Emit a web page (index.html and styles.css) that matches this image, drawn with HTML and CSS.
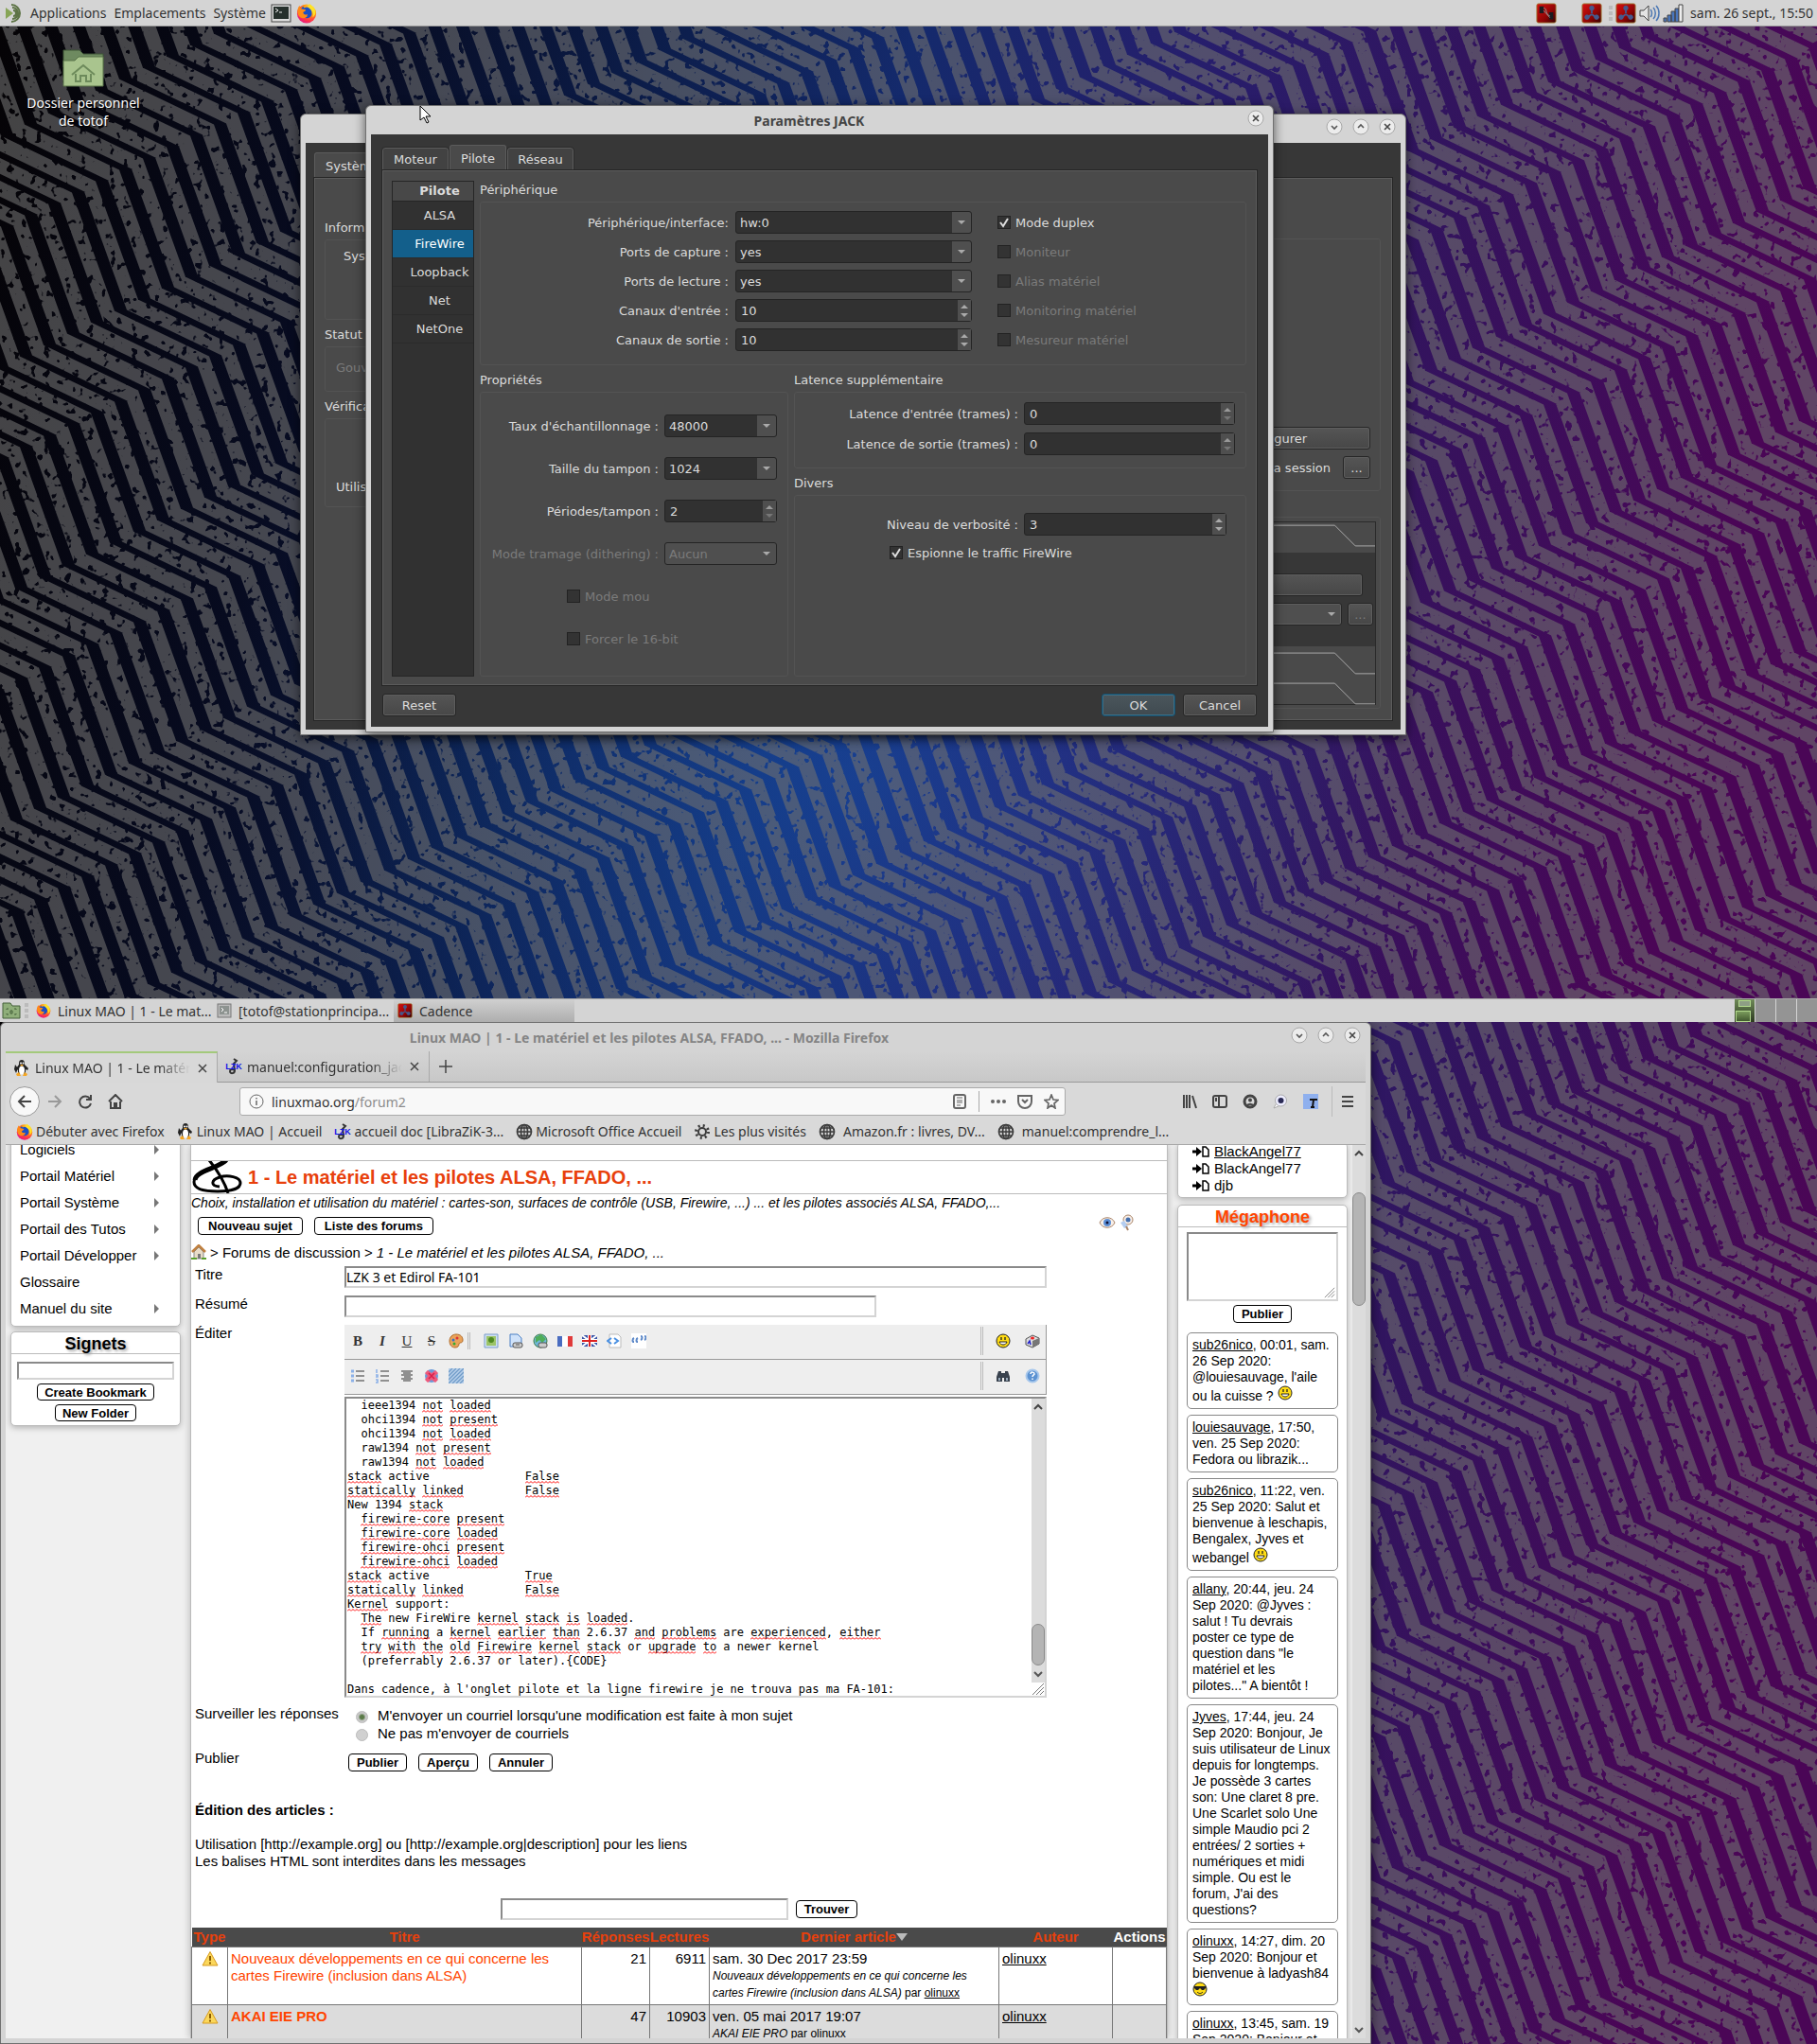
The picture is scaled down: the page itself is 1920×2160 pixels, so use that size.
FILE: index.html
```html
<!DOCTYPE html>
<html lang="fr">
<head>
    <meta charset="UTF-8">
    <meta name="viewport" content="width=device-width, initial-scale=1.0">
    <title>Bureau MATE</title>
    <link rel="stylesheet" href="styles.css">
</head>
<body>

    <!-- Shared icons -->
    <svg class="defs" aria-hidden="true">
        <defs>
            <linearGradient id="fond" x1="0" y1="0" x2="1" y2="0.12">
                <stop offset="0" stop-color="#050305"/>
                <stop offset="0.2" stop-color="#070b20"/>
                <stop offset="0.36" stop-color="#0c1d4a"/>
                <stop offset="0.5" stop-color="#142a6c"/>
                <stop offset="0.66" stop-color="#271e6c"/>
                <stop offset="0.8" stop-color="#32145e"/>
                <stop offset="1" stop-color="#4a0656"/>
            </linearGradient>
            <radialGradient id="lueur" cx="0.5" cy="0.5" r="0.5">
                <stop offset="0" stop-color="#1659b4" stop-opacity="0.5"/>
                <stop offset="1" stop-color="#1659b4" stop-opacity="0"/>
            </radialGradient>
            <filter id="usure" x="0" y="0" width="1920" height="1080" filterUnits="userSpaceOnUse">
                <feTurbulence type="fractalNoise" baseFrequency="0.13" numOctaves="2" seed="4"/>
                <feColorMatrix values="0 0 0 0 0  0 0 0 0 0  0 0 0 0 0  14 0 0 0 -8.6"/>
                <feComposite in="SourceGraphic" operator="out"/>
            </filter>
            <radialGradient id="ff-feu" cx="0.75" cy="0.15" r="0.95">
                <stop offset="0" stop-color="#fff44f"/>
                <stop offset="0.4" stop-color="#ff980e"/>
                <stop offset="0.75" stop-color="#ff3647"/>
                <stop offset="1" stop-color="#e31587"/>
            </radialGradient>
            <linearGradient id="rouge" x1="0" y1="0" x2="1" y2="1">
                <stop offset="0" stop-color="#d81010"/>
                <stop offset="0.6" stop-color="#8e0505"/>
                <stop offset="1" stop-color="#300"/>
            </linearGradient>
        </defs>
        <symbol id="firefox" viewBox="0 0 24 24">
            <circle cx="12" cy="12.5" r="11" fill="url(#ff-feu)"/>
            <path d="M12 5a7 7 0 0 1 6 8c-1 4-5 6-9 4 2 0 4-1 4-2-3 1-6-1-6-4l-2-2c0-2 2-4 3-5l1 2z" fill="#1a4fc4"/>
            <path d="M4 3c0 3 1 4 3 4l4 1c0 1-1 2-3 3 0 3 3 3 5 2 0 4-5 6-8 4C0 14 1 6 4 3z" fill="#ff8a16"/>
            <path d="M15 1c5 3 8 7 7 12-1 2-3 4-3 4 1-5 0-8-4-11-1-2-1-3 0-5z" fill="#ffe226"/>
        </symbol>
        <symbol id="cadence" viewBox="0 0 24 24">
            <rect x="1" y="1" width="22" height="22" rx="2" fill="url(#rouge)" stroke="#a07a35"/>
            <g fill="#46598c" stroke="#46598c"><path d="M12 12V7M12 13l-5 4M12 13l5 4" stroke-width="2"/><circle cx="12" cy="6" r="2.5"/><circle cx="6.500" cy="16.500" r="2.500"/><circle cx="17.500" cy="16.500" r="2.500"/></g>
        </symbol>
        <symbol id="tux" viewBox="0 0 18 18">
            <path d="M2 5l3 4-2 5-2-4z" fill="#222"/><path d="M9 0c3 0 3 3 3 5l4 4-1 2-2-1v5H5v-5l-2 2 0-3 3-4c0-2 0-5 3-5z" fill="#222"/>
            <ellipse cx="9" cy="11" rx="3" ry="4.500" fill="#fff"/><circle cx="8" cy="3.500" r="1" fill="#fff"/><circle cx="10.500" cy="3.500" r="1" fill="#fff"/>
            <path d="M7 5h4l-2 2zM3 15l3-2 2 4H4zM15 15l-3-2-2 4h4z" fill="#f5a623"/>
        </symbol>
        <symbol id="lzk" viewBox="0 0 18 18">
            <path d="M9 1l3 2-3 3 1 7c0 4-5 4-5 1 0-2 3-3 4-1" fill="none" stroke="#333" stroke-width="2"/>
            <text x="9" y="12" text-anchor="middle" class="lzk-text">LZK</text>
        </symbol>
        <symbol id="globe" viewBox="0 0 18 18">
            <g fill="none" stroke="#3c3c3c" stroke-width="1.700"><circle cx="9" cy="9" r="7.500"/><ellipse cx="9" cy="9" rx="3.500" ry="7.500"/><path d="M1.500 9h15M9 1.500v15M3 5h12M3 13h12" stroke-width="1.300"/></g>
        </symbol>
        <symbol id="b-min" viewBox="0 0 18 18"><circle cx="9" cy="9" r="8" fill="#ececec" stroke="#a8a8a8"/><path d="M6 8l3 3 3-3" fill="none" stroke="#555" stroke-width="1.600"/></symbol>
        <symbol id="b-max" viewBox="0 0 18 18"><circle cx="9" cy="9" r="8" fill="#ececec" stroke="#a8a8a8"/><path d="M6 10l3-3 3 3" fill="none" stroke="#555" stroke-width="1.600"/></symbol>
        <symbol id="b-close" viewBox="0 0 18 18"><circle cx="9" cy="9" r="8" fill="#ececec" stroke="#a8a8a8"/><path d="M6 6l6 6M12 6l-6 6" fill="none" stroke="#444" stroke-width="1.600"/></symbol>
        <symbol id="smiley" viewBox="0 0 16 16"><circle cx="8" cy="8" r="7" fill="#ffdc14" stroke="#222"/><path d="M6 4v3M10 4v3" stroke="#222" stroke-width="1.300"/><path d="M4 9c1 4 7 4 8 0z" fill="#fff" stroke="#222"/></symbol>
        <symbol id="cool" viewBox="0 0 16 16"><circle cx="8" cy="8" r="7" fill="#ffdc14" stroke="#222"/><path d="M2 5h12v2l-2 2h-2L8 7 6 9H4L2 7z" fill="#222"/><path d="M5 11c2 2 4 2 6 0" fill="none" stroke="#222"/></symbol>
        <symbol id="warn" viewBox="0 0 18 18"><path d="M9 1.500L17 16H1z" fill="#fbd75b" stroke="#d79a1e" stroke-linejoin="round"/><path d="M9 6v5M9 12.500v2" stroke="#8a5a00" stroke-width="2"/></symbol>
        <symbol id="doc" viewBox="0 0 18 14"><path d="M0 7h5" stroke="#000" stroke-width="3"/><path d="M4 2l6 5-6 5z"/><path d="M11 2h3l3 3v7h-6z" fill="#fff" stroke="#000" stroke-width="1.500"/></symbol>
        <symbol id="poignee" viewBox="0 0 14 14"><path d="M1 13L13 1M5 13l8-8M9 13l4-4" stroke="#777" fill="none"/></symbol>
        <symbol id="haut" viewBox="0 0 10 10"><path d="M1 7l4-4 4 4" fill="none" stroke="#444" stroke-width="2"/></symbol>
        <symbol id="bas" viewBox="0 0 10 10"><path d="M1 3l4 4 4-4" fill="none" stroke="#555" stroke-width="2"/></symbol>
    </svg>

    <!-- Upper monitor -->
    <section class="screen">
        <svg class="wallpaper" viewBox="0 0 1920 1080" preserveAspectRatio="none" aria-hidden="true">
            <rect width="1920" height="1080" fill="url(#fond)"/>
            <ellipse cx="900" cy="820" rx="600" ry="560" fill="url(#lueur)"/>
            <path class="zigzag" filter="url(#usure)"/>
        </svg>

        <header class="panel">
            <svg class="i20" viewBox="0 0 20 20"><path d="M1 4l8 6-8 6z" fill="#87a556"/><g fill="none" stroke="#5d7345" stroke-width="2"><path d="M8 4a6 6 0 1 1 0 12M7 1a9 9 0 1 1 0 18M9 7a3 3 0 0 1 0 6"/></g></svg>
            <button>Applications</button>
            <button>Emplacements</button>
            <button>Système</button>
            <svg class="i22" viewBox="0 0 22 22"><rect x="1" y="2" width="20" height="18" fill="#ddd" stroke="#444"/><rect x="3" y="4" width="16" height="13" fill="#26302c"/><path d="M5 6l3 2-3 2M9 10h3" stroke="#eee" fill="none"/></svg>
            <svg class="i22"><use href="#firefox"/></svg>
            <div class="tray">
                <svg class="i22 patch" viewBox="0 0 24 24"><rect x="1" y="1" width="22" height="22" rx="2" fill="url(#rouge)" stroke="#a07a35"/><path d="M4 4h5v8H4zM15 11h5v8h-5z" fill="#1c1c20"/><path d="M9 6c4 0 2 8 7 9M9 9l7 8" stroke="#999" fill="none"/></svg>
                <svg class="i22"><use href="#cadence"/></svg>
                <span class="grip"></span>
                <svg class="i22"><use href="#cadence"/></svg>
                <svg class="i22" viewBox="0 0 22 22"><path d="M1 8h4l5-5v16l-5-5H1z" fill="#e4e4e4" stroke="#444"/><path d="M12 7c2 2 2 6 0 8M15 5c3 3 3 9 0 12M18 3c4 4 4 12 0 16" fill="none" stroke="#4d78b4" stroke-width="1.500"/></svg>
                <svg class="i22" viewBox="0 0 22 22"><g fill="#4a77bd" stroke="#444"><path d="M1 16h3v4H1zM5 13h4v7H5zM9 9h4v11H9zM13 6h4v14h-4z"/><path d="M17 2h4v18h-4z" fill="#eee"/></g></svg>
                <span class="clock">sam. 26 sept., 15:50</span>
            </div>
        </header>

        <a class="folder" href="#">
            <svg viewBox="0 0 46 44"><path d="M2 3h17l4 4h21v14H2z" fill="#6e8a60" stroke="#3f5637"/><path d="M2 14h12l4-4h26v31H2z" fill="#a9c48e" stroke="#587348"/><path d="M11 29l12-10 12 10M15 28v8h5v-6h6v6h5v-8" fill="none" stroke="#6d8a5b" stroke-width="2"/></svg>
            Dossier personnel<br>de totof
        </a>

        <!-- Cadence -->
        <section class="window cadence">
            <header class="titlebar right">
                <button aria-label="Réduire"><svg><use href="#b-min"/></svg></button>
                <button aria-label="Agrandir"><svg><use href="#b-max"/></svg></button>
                <button aria-label="Fermer"><svg><use href="#b-close"/></svg></button>
            </header>
            <div class="qt cadence-body">
                <button class="cadence-tab">Système</button>
                <div class="cadence-panel">
                    <div class="cadence-left">
                        <h3>Informations système</h3>
                        <div class="groupbox g1"><p>Système :</p></div>
                        <h3>Statut du processeur</h3>
                        <div class="groupbox g2"><p class="off">Gouverneur :</p></div>
                        <h3>Vérifications</h3>
                        <div class="groupbox g3"><p>Utilisateur</p></div>
                    </div>
                    <div class="cadence-right">
                        <div class="groupbox g4">
                            <button class="btn">Configurer</button>
                            <div class="line"><span>de la session</span><button class="btn mini">...</button></div>
                        </div>
                        <div class="groupbox g5">
                            <div class="toolbox">
                                <svg class="fold" viewBox="0 0 208 32"><path d="M0 3h165l22 22h21" fill="none" stroke="#aaa"/></svg>
                                <div class="band">
                                    <button class="btn" aria-label="Pont"></button>
                                    <div class="line"><select class="btn" aria-label="Mode"><option></option></select><button class="btn mini off">...</button></div>
                                </div>
                                <svg class="fold" viewBox="0 0 208 32"><path d="M0 7h165l22 22h21" fill="none" stroke="#aaa"/></svg>
                                <svg class="fold" viewBox="0 0 208 32"><path d="M0 7h165l22 22h21" fill="none" stroke="#aaa"/></svg>
                            </div>
                        </div>
                    </div>
                </div>
            </div>
        </section>

        <!-- JACK settings -->
        <section class="window jack">
            <header class="titlebar">
                <h2>Paramètres JACK</h2>
                <button aria-label="Fermer"><svg><use href="#b-close"/></svg></button>
            </header>
            <form class="qt jack-body">
                <nav class="tabs">
                    <button type="button">Moteur</button>
                    <button type="button" class="active">Pilote</button>
                    <button type="button">Réseau</button>
                </nav>
                <div class="jack-panel">
                    <div class="drivers">
                        <b>Pilote</b>
                        <button type="button">ALSA</button>
                        <button type="button" class="active">FireWire</button>
                        <button type="button">Loopback</button>
                        <button type="button">Net</button>
                        <button type="button">NetOne</button>
                    </div>
                    <div class="settings">
                        <h3>Périphérique</h3>
                        <div class="groupbox device">
                            <div class="fields">
                                <label for="iface">Périphérique/interface:</label>
                                <select id="iface"><option>hw:0</option></select>
                                <label for="pcap">Ports de capture :</label>
                                <select id="pcap"><option>yes</option></select>
                                <label for="plec">Ports de lecture :</label>
                                <select id="plec"><option>yes</option></select>
                                <label for="cin">Canaux d'entrée :</label>
                                <span class="spin"><input id="cin" type="text" value="10"><i></i></span>
                                <label for="cout">Canaux de sortie :</label>
                                <span class="spin"><input id="cout" type="text" value="10"><i></i></span>
                            </div>
                            <div class="checks">
                                <label><input type="checkbox" checked>Mode duplex</label>
                                <label class="off"><input type="checkbox" disabled>Moniteur</label>
                                <label class="off"><input type="checkbox" disabled>Alias matériel</label>
                                <label class="off"><input type="checkbox" disabled>Monitoring matériel</label>
                                <label class="off"><input type="checkbox" disabled>Mesureur matériel</label>
                            </div>
                        </div>
                        <div class="halves">
                            <div class="half-left">
                                <h3>Propriétés</h3>
                                <div class="groupbox props">
                                    <label for="taux">Taux d'échantillonnage :</label>
                                    <select id="taux"><option>48000</option></select>
                                    <label for="tampon">Taille du tampon :</label>
                                    <select id="tampon"><option>1024</option></select>
                                    <label for="periodes">Périodes/tampon :</label>
                                    <span class="spin"><input id="periodes" type="text" value="2"><i class="low"></i></span>
                                    <label for="dither" class="off">Mode tramage (dithering) :</label>
                                    <select id="dither" class="plain" disabled><option>Aucun</option></select>
                                    <label class="off wide"><input type="checkbox" disabled>Mode mou</label>
                                    <label class="off wide"><input type="checkbox" disabled>Forcer le 16-bit</label>
                                </div>
                            </div>
                            <div class="half-right">
                                <h3>Latence supplémentaire</h3>
                                <div class="groupbox latency">
                                    <label for="lin">Latence d'entrée (trames) :</label>
                                    <span class="spin"><input id="lin" type="text" value="0"><i class="low"></i></span>
                                    <label for="lout">Latence de sortie (trames) :</label>
                                    <span class="spin"><input id="lout" type="text" value="0"><i class="low"></i></span>
                                </div>
                                <h3>Divers</h3>
                                <div class="groupbox misc">
                                    <label for="verb">Niveau de verbosité :</label>
                                    <span class="spin"><input id="verb" type="text" value="3"><i></i></span>
                                    <label class="wide"><input type="checkbox" checked>Espionne le traffic FireWire</label>
                                </div>
                            </div>
                        </div>
                    </div>
                </div>
                <footer class="actions">
                    <button type="button" class="btn">Reset</button>
                    <button type="button" class="btn ok">OK</button>
                    <button type="button" class="btn">Cancel</button>
                </footer>
            </form>
        </section>

        <svg class="pointer" viewBox="0 0 14 20"><path d="M1 1v15l4-3 3 6 2-1-3-6h5z" fill="#fff" stroke="#000"/></svg>

        <footer class="panel taskbar">
            <svg class="i20" viewBox="0 0 20 20"><path d="M1 2h8l2 3h8v13H1z" fill="#8fae7a" stroke="#44603a"/><path d="M5 9v-1h2M13 8h2v1M15 13v1h-2M7 14H5v-1M9 10h2v3H9z" fill="none" stroke="#44603a"/></svg>
            <span class="grip"></span>
            <button class="task"><svg class="i16"><use href="#firefox"/></svg>Linux MAO | 1 - Le mat...</button>
            <button class="task"><svg class="i16" viewBox="0 0 16 16"><rect x="1" y="1" width="14" height="14" fill="#bbb" stroke="#777"/><rect x="3" y="3" width="10" height="9" fill="#8d9390"/><path d="M5 5l2 2-2 2M8 10h3" stroke="#fff" fill="none"/></svg>[totof@stationprincipa...</button>
            <button class="task active"><svg class="i16"><use href="#cadence"/></svg>Cadence</button>
            <div class="workspaces"><span class="current"><i></i><b></b></span><span></span><span></span><span></span></div>
        </footer>
    </section>

    <!-- Lower monitor -->
    <section class="screen">
        <svg class="wallpaper" viewBox="0 0 1920 1080" preserveAspectRatio="none" aria-hidden="true">
            <rect width="1920" height="1080" fill="url(#fond)"/>
            <path class="zigzag" filter="url(#usure)"/>
        </svg>

        <section class="window browser">
            <header class="titlebar">
                <h2>Linux MAO | 1 - Le matériel et les pilotes ALSA, FFADO, ... - Mozilla Firefox</h2>
                <button aria-label="Réduire"><svg><use href="#b-min"/></svg></button>
                <button aria-label="Agrandir"><svg><use href="#b-max"/></svg></button>
                <button aria-label="Fermer"><svg><use href="#b-close"/></svg></button>
            </header>

            <nav class="ff-tabs">
                <div class="ff-tab active"><svg class="i18"><use href="#tux"/></svg><span>Linux MAO | 1 - Le matériel</span><button aria-label="Fermer l'onglet"><svg viewBox="0 0 10 10"><path d="M1 1l8 8M9 1l-8 8"/></svg></button></div>
                <div class="ff-tab"><svg class="i18"><use href="#lzk"/></svg><span>manuel:configuration_jack</span><button aria-label="Fermer l'onglet"><svg viewBox="0 0 10 10"><path d="M1 1l8 8M9 1l-8 8"/></svg></button></div>
                <button class="new-tab" aria-label="Nouvel onglet"><svg viewBox="0 0 14 14"><path d="M7 0v14M0 7h14"/></svg></button>
            </nav>

            <div class="ff-nav">
                <button class="back" aria-label="Précédent"><svg viewBox="0 0 16 16"><path d="M15 8H2M8 2L2 8l6 6"/></svg></button>
                <button class="fwd" aria-label="Suivant" disabled><svg viewBox="0 0 16 16"><path d="M1 8h13M8 2l6 6-6 6"/></svg></button>
                <button aria-label="Actualiser"><svg viewBox="0 0 16 16"><path d="M13 5a6 6 0 1 0 1 5M14 1v5H9"/></svg></button>
                <button aria-label="Accueil"><svg viewBox="0 0 16 16"><path d="M1 8l7-7 7 7M3 8v7h10V8M7 15v-5h2v5"/></svg></button>
                <div class="urlbar">
                    <svg viewBox="0 0 16 16"><circle cx="8" cy="8" r="7" stroke-width="1"/><path d="M8 7v5M8 4v1.500" stroke-width="1.500"/></svg>
                    <span class="url">linuxmao.org<i>/forum2</i></span>
                    <svg viewBox="0 0 16 16"><rect x="2" y="1" width="12" height="14" rx="2"/><path d="M5 4h6M5 7h6M5 9h6M5 12h4" stroke-width="1"/></svg>
                    <b></b>
                    <svg viewBox="0 0 16 16"><g fill="#666" stroke="none"><circle cx="2" cy="8" r="2"/><circle cx="8" cy="8" r="2"/><circle cx="14" cy="8" r="2"/></g></svg>
                    <svg viewBox="0 0 16 16"><path d="M1 2h14v6a7 7 0 0 1-14 0zM5 6l3 3 3-3"/></svg>
                    <svg viewBox="0 0 16 16"><path d="M8 1l2 5 5 .500-4 3.500 1 5-4-3-4 3 1-5-4-3.500L6 6z" stroke-width="1.700"/></svg>
                </div>
                <div class="ff-tools">
                    <button aria-label="Bibliothèque"><svg viewBox="0 0 16 16"><path d="M2 1v14M5 1v14M8 1v14M11 2l4 13"/></svg></button>
                    <button aria-label="Panneaux"><svg viewBox="0 0 16 16"><rect x="1" y="2" width="14" height="12" rx="2"/><path d="M7 2v12M3 5h2M3 7h2"/></svg></button>
                    <button aria-label="Compte"><svg viewBox="0 0 16 16"><circle cx="8" cy="8" r="6" stroke-width="3"/><circle cx="8" cy="6.500" r="2" fill="#444" stroke="none"/><path d="M4 13c2-3 6-3 8 0" stroke-width="2"/></svg></button>
                    <button aria-label="Dictaphone"><svg viewBox="0 0 16 16"><circle cx="8.500" cy="7" r="6" fill="#eef" stroke="#aaa" stroke-width="1"/><path d="M3 11l-2 4 5-2" fill="#fff" stroke="#aaa" stroke-width="1"/><circle cx="8.500" cy="7" r="3" fill="#2a2a55" stroke="none"/></svg></button>
                    <button aria-label="Traduire"><svg viewBox="0 0 16 16"><path d="M0 0h16v16H0z" fill="#8fb0ee" stroke="none"/><path d="M7 6h8M11 6l-1 8M8 14h4" stroke="#111"/></svg></button>
                    <button class="menu" aria-label="Menu"><svg viewBox="0 0 16 16"><path d="M2 3h12M2 8h12M2 13h12"/></svg></button>
                </div>
            </div>

            <nav class="bookmarks">
                <a href="#"><svg class="i18"><use href="#firefox"/></svg>Débuter avec Firefox</a>
                <a href="#"><svg class="i18"><use href="#tux"/></svg>Linux MAO | Accueil</a>
                <a href="#"><svg class="i18"><use href="#lzk"/></svg>accueil doc [LibraZiK-3...</a>
                <a href="#"><svg class="i18"><use href="#globe"/></svg>Microsoft Office Accueil</a>
                <a href="#"><svg class="i18" viewBox="0 0 18 18"><g fill="none" stroke="#3c3c3c"><circle cx="9" cy="9" r="4" stroke-width="2"/><circle cx="9" cy="9" r="6.500" stroke-width="3" stroke-dasharray="2 3.100"/></g></svg>Les plus visités</a>
                <a href="#" class="loose"><svg class="i18"><use href="#globe"/></svg>Amazon.fr : livres, DV...</a>
                <a href="#" class="loose"><svg class="i18"><use href="#globe"/></svg>manuel:comprendre_l...</a>
            </nav>

            <div class="viewport">
                <aside class="col-left">
                    <nav class="box menu-list">
                        <a href="#" class="sub">Logiciels</a>
                        <a href="#" class="sub">Portail Matériel</a>
                        <a href="#" class="sub">Portail Système</a>
                        <a href="#" class="sub">Portail des Tutos</a>
                        <a href="#" class="sub">Portail Développer</a>
                        <a href="#">Glossaire</a>
                        <a href="#" class="sub">Manuel du site</a>
                    </nav>
                    <section class="box signets">
                        <h3>Signets</h3>
                        <input type="text" aria-label="Signet">
                        <button class="pill">Create Bookmark</button>
                        <button class="pill">New Folder</button>
                    </section>
                </aside>

                <main class="forum">
                    <h1>
                        <svg viewBox="0 0 54 34"><g fill="none" stroke="#000"><path d="M38 -1C30 8 3 11 3 22c0 9 14 10 25 10 14 0 24-3 24-9 0-6-13-9-22-6-9 3-10 9 0 10" stroke-width="3"/><path d="M37 -1C28 8 5 10 4 20" stroke-width="5"/><path d="M19 -1c8 10 16 22 20 35" stroke-width="3"/></g></svg>
                        <span>1 - Le matériel et les pilotes ALSA, FFADO, ...</span>
                    </h1>
                    <p class="desc">Choix, installation et utilisation du matériel : cartes-son, surfaces de contrôle (USB, Firewire, ...) ... et les pilotes associés ALSA, FFADO,...</p>
                    <div class="forum-actions">
                        <button class="pill">Nouveau sujet</button>
                        <button class="pill">Liste des forums</button>
                        <span class="watch">
                            <svg class="i18" viewBox="0 0 18 18"><path d="M1 9c3-7 13-7 16 0-3 7-13 7-16 0z" fill="#f8efe8" stroke="#a98468"/><circle cx="9" cy="9" r="4" fill="#5c8fd6"/><circle cx="9" cy="9" r="1.500" fill="#113"/></svg>
                            <svg class="i18" viewBox="0 0 18 18"><circle cx="11" cy="6" r="5" fill="#f8efe8" stroke="#a98468"/><circle cx="11" cy="6" r="2.500" fill="#446fae"/><path d="M3 9l4-2 4 6-4 2z" fill="#b4cdf0"/><path d="M9 13l2 4" stroke="#a98468" stroke-width="2"/></svg>
                        </span>
                    </div>
                    <p class="crumbs">
                        <svg class="i16" viewBox="0 0 16 16"><path d="M3 8v7h10V8L8 3z" fill="#e8dcc8" stroke="#888"/><path d="M1 8l7-7 7 7" fill="none" stroke="#c08040" stroke-width="2.500"/><path d="M7 10h3v5H7z" fill="#777"/><path d="M0 15h6M11 15h5" stroke="#5aa02c" stroke-width="2"/></svg>
                        &gt; Forums de discussion &gt; <i>1 - Le matériel et les pilotes ALSA, FFADO, ...</i>
                    </p>

                    <form class="post">
                        <label for="titre">Titre</label>
                        <input id="titre" type="text" value="LZK 3 et Edirol FA-101">
                        <label for="resume">Résumé</label>
                        <input id="resume" class="short" type="text">
                        <label for="texte">Éditer</label>
                        <div class="editor">
                            <div class="toolbar">
                                <button type="button"><b>B</b></button>
                                <button type="button"><b><em>I</em></b></button>
                                <button type="button"><u>U</u></button>
                                <button type="button"><s>S</s></button>
                                <button type="button" aria-label="Couleur"><svg viewBox="0 0 16 16"><path d="M8 1c5 0 7 3 7 6 0 4-3 2-4 4 0 2-1 4-4 4-4 0-6-3-6-7s3-7 7-7z" fill="#e9a35a" stroke="#b06a28"/><circle cx="5" cy="7" r="1.500" fill="#3a6fc4"/><circle cx="9" cy="5" r="1.500" fill="#d33"/><circle cx="6" cy="11" r="1.500" fill="#3a3"/></svg></button>
                                <span class="sep"></span>
                                <button type="button" aria-label="Image"><svg viewBox="0 0 16 16"><path d="M1 1h14v14H1z" fill="#cfe0f4" stroke="#7a9cc8"/><path d="M3 3h10v10H3z" fill="#9cc468"/><circle cx="8" cy="7" r="3" fill="#4f8a22"/></svg></button>
                                <button type="button" aria-label="Page"><svg viewBox="0 0 16 16"><path d="M2 1h8l4 4v9H2z" fill="#cfe2fa" stroke="#4a7fc4"/><rect x="5" y="10" width="10" height="5" rx="2" fill="#ccc" stroke="#555"/><path d="M8 12h4" stroke="#555"/></svg></button>
                                <button type="button" aria-label="Lien"><svg viewBox="0 0 16 16"><circle cx="8" cy="8" r="7" fill="#6fb6d8" stroke="#3c7c44"/><path d="M3 4l6-3 5 5-4 4-3-3-4 3z" fill="#4fae58"/><rect x="6" y="10" width="9" height="5" rx="2" fill="#ccc" stroke="#555"/></svg></button>
                                <button type="button" aria-label="Français"><svg viewBox="0 0 16 16"><path d="M0 3h5v11H0z" fill="#4a6cc0"/><path d="M5 3h6v11H5z" fill="#fff"/><path d="M11 3h5v11h-5z" fill="#e03a3a"/></svg></button>
                                <button type="button" aria-label="Anglais"><svg viewBox="0 0 16 12"><path d="M0 0h16v12H0z" fill="#3a55a8"/><path d="M0 0l16 12M16 0L0 12" stroke="#fff" stroke-width="2"/><path d="M8 0v12M0 6h16" stroke="#fff" stroke-width="4"/><path d="M8 0v12M0 6h16" stroke="#d22" stroke-width="2"/></svg></button>
                                <button type="button" aria-label="Code"><svg viewBox="0 0 16 16"><path d="M3 1h9l3 3v11H3z" fill="#fff" stroke="#bbb"/><path d="M5 5L1 8l4 3M8 5l4 3-4 3" fill="none" stroke="#4a90e2" stroke-width="2"/></svg></button>
                                <button type="button" class="quote" aria-label="Citation"><svg viewBox="0 0 16 16"><path d="M0 0h16v16H0z" fill="#fff"/><path d="M3 5c-2 1-2 4 0 4M7 5c-2 1-2 4 0 4M10 3c2 0 2 3 0 4M14 3c2 0 2 3 0 4" fill="none" stroke="#5c88c8" stroke-width="2"/></svg></button>
                                <span class="sep end"></span>
                                <button type="button" aria-label="Smileys"><svg><use href="#smiley"/></svg></button>
                                <button type="button" aria-label="Caractères"><svg viewBox="0 0 16 16"><path d="M1 6l7-4 7 3v6l-7 4-7-3z" fill="#ddd" stroke="#555"/><path d="M8 8v7l7-4V5z" fill="#777"/><ellipse cx="8" cy="5" rx="2" ry="1.500" fill="#e22"/><path d="M3 11l2-3 1 4" stroke="#22c" fill="none" stroke-width="1.500"/></svg></button>
                            </div>
                            <div class="toolbar">
                                <button type="button" aria-label="Liste"><svg viewBox="0 0 16 16"><path d="M1 3h3M1 8h3M1 13h3" stroke="#8ab0e8" stroke-width="3"/><path d="M6 3h9M6 8h9M6 13h9" stroke="#333"/></svg></button>
                                <button type="button" aria-label="Liste numérotée"><svg viewBox="0 0 16 16"><path d="M2 1v4M1 7h2v2H1M1 12h2v3H1" stroke="#8ab0e8" fill="none" stroke-width="1.500"/><path d="M6 3h9M6 8h9M6 13h9" stroke="#333"/></svg></button>
                                <button type="button" aria-label="Centrer"><svg viewBox="0 0 16 16"><path d="M2 3h12M4 5h8M2 7h12M5 9h7M2 11h12M4 13h8" stroke="#333"/></svg></button>
                                <button type="button" aria-label="Aide wiki"><svg viewBox="0 0 16 16"><circle cx="8" cy="8" r="7" fill="#6c9ad8"/><path d="M4 2l4 3 4-3 3 3-3 3 3 4-3 3-4-3-4 3-3-3 3-4-3-3z" fill="#ee5a7c"/><path d="M5 5l6 6M11 5l-6 6" stroke="#d4204a" stroke-width="1.500"/></svg></button>
                                <button type="button" aria-label="Trame"><svg viewBox="0 0 16 16"><path d="M0 0h16v16H0z" fill="#b8d0ea"/><path d="M0 4l4-4M0 8l8-8M0 12L12 0M0 16L16 0M4 16L16 4M8 16l8-8M12 16l4-4" stroke="#6f9bc8" stroke-width="1.300"/></svg></button>
                                <span class="sep end"></span>
                                <button type="button" aria-label="Rechercher"><svg viewBox="0 0 16 16"><path d="M3 3h3v2h4V3h3l2 6v5H9v-4H7v4H1V9z" fill="#39424e"/><path d="M3 10h2v3H3zM11 10h2v3h-2z" fill="#9ab"/></svg></button>
                                <button type="button" aria-label="Aide"><svg viewBox="0 0 16 16"><circle cx="8" cy="8" r="6.500" fill="#5d93d2" stroke="#a8c8ec" stroke-width="2"/><path d="M6 6c0-3 4-2 4 0 0 1-2 1-2 3M8 10.500v1.500" stroke="#fff" fill="none" stroke-width="1.500"/></svg></button>
                            </div>
                            <div class="textbox">
                                <div class="text-wrap">
<textarea id="texte" rows="21" spellcheck="false">
  ieee1394 not loaded
  ohci1394 not present
  ohci1394 not loaded
  raw1394 not present
  raw1394 not loaded
stack active              False
statically linked         False
New 1394 stack
  firewire-core present
  firewire-core loaded
  firewire-ohci present
  firewire-ohci loaded
stack active              True
statically linked         False
Kernel support:
  The new FireWire kernel stack is loaded.
  If running a kernel earlier than 2.6.37 and problems are experienced, either
  try with the old Firewire kernel stack or upgrade to a newer kernel
  (preferrably 2.6.37 or later).{CODE}

Dans cadence, à l'onglet pilote et la ligne firewire je ne trouva pas ma FA-101:</textarea>
                                    <div class="spelling" id="spelling"></div>
                                </div>
                                <div class="text-side">
                                    <div class="scroll low"><svg><use href="#haut"/></svg><i></i><svg><use href="#bas"/></svg></div>
                                    <svg class="corner"><use href="#poignee"/></svg>
                                </div>
                            </div>
                        </div>
                        <span>Surveiller les réponses</span>
                        <div class="radios">
                            <label><input type="radio" name="suivi" checked>M'envoyer un courriel lorsqu'une modification est faite à mon sujet</label>
                            <label><input type="radio" name="suivi">Ne pas m'envoyer de courriels</label>
                        </div>
                        <span>Publier</span>
                        <div class="submit">
                            <button type="button" class="pill">Publier</button>
                            <button type="button" class="pill">Aperçu</button>
                            <button type="button" class="pill">Annuler</button>
                        </div>
                    </form>

                    <div class="help">
                        <b>Édition des articles :</b>
                        <p>Utilisation [http://example.org] ou [http://example.org|description] pour les liens<br>Les balises HTML sont interdites dans les messages</p>
                    </div>

                    <div class="search">
                        <input type="text" aria-label="Trouver">
                        <button class="pill">Trouver</button>
                    </div>

                    <table>
                        <colgroup><col class="c1"><col class="c2"><col class="c3"><col class="c4"><col class="c5"><col class="c6"><col class="c7"></colgroup>
                        <thead>
                            <tr><th>Type</th><th>Titre</th><th>Réponses</th><th>Lectures</th><th>Dernier article<svg viewBox="0 0 12 10"><path d="M0 1h12L6 9z" fill="#bbb"/></svg></th><th>Auteur</th><th class="white">Actions</th></tr>
                        </thead>
                        <tbody>
                            <tr>
                                <td class="icon"><svg class="i18"><use href="#warn"/></svg></td>
                                <td><a class="topic" href="#">Nouveaux développements en ce qui concerne les cartes Firewire (inclusion dans ALSA)</a></td>
                                <td class="num">21</td><td class="num">6911</td>
                                <td>sam. 30 Dec 2017 23:59<small><i>Nouveaux développements en ce qui concerne les cartes Firewire (inclusion dans ALSA)</i> par <a href="#">olinuxx</a></small></td>
                                <td><a href="#">olinuxx</a></td><td></td>
                            </tr>
                            <tr class="odd">
                                <td class="icon"><svg class="i18"><use href="#warn"/></svg></td>
                                <td><a class="topic" href="#"><b>AKAI EIE PRO</b></a></td>
                                <td class="num">47</td><td class="num">10903</td>
                                <td>ven. 05 mai 2017 19:07<small><i>AKAI EIE PRO</i> par <a href="#">olinuxx</a></small></td>
                                <td><a href="#">olinuxx</a></td><td></td>
                            </tr>
                        </tbody>
                    </table>
                </main>

                <aside class="col-right">
                    <section class="box online">
                        <a href="#"><svg><use href="#doc"/></svg><u>BlackAngel77</u></a>
                        <a href="#"><svg><use href="#doc"/></svg>BlackAngel77</a>
                        <a href="#"><svg><use href="#doc"/></svg>djb</a>
                    </section>
                    <section class="box shout">
                        <h3>Mégaphone</h3>
                        <div class="shout-text"><textarea aria-label="Message"></textarea><svg><use href="#poignee"/></svg></div>
                        <button class="pill">Publier</button>
                        <p><a href="#">sub26nico</a>, 00:01, sam. 26 Sep 2020: @louiesauvage, l'aile ou la cuisse ? <svg><use href="#smiley"/></svg></p>
                        <p><a href="#">louiesauvage</a>, 17:50, ven. 25 Sep 2020: Fedora ou librazik...</p>
                        <p><a href="#">sub26nico</a>, 11:22, ven. 25 Sep 2020: Salut et bienvenue à leschapis, Bengalex, Jyves et webangel <svg><use href="#smiley"/></svg></p>
                        <p><a href="#">allany</a>, 20:44, jeu. 24 Sep 2020: @Jyves :<br>salut ! Tu devrais<br>poster ce type de question dans "le<br>matériel et les<br>pilotes..." A bientôt !</p>
                        <p><a href="#">Jyves</a>, 17:44, jeu. 24 Sep 2020: Bonjour, Je suis utilisateur de Linux depuis for longtemps. Je possède 3 cartes son: Une claret 8 pre. Une Scarlet solo Une simple Maudio pci 2 entrées/ 2 sorties + numériques et midi simple. Ou est le<br>forum, J'ai des<br>questions?</p>
                        <p><a href="#">olinuxx</a>, 14:27, dim. 20 Sep 2020: Bonjour et bienvenue à ladyash84 <svg><use href="#cool"/></svg></p>
                        <p><a href="#">olinuxx</a>, 13:45, sam. 19 Sep 2020: Bonjour et</p>
                    </section>
                </aside>

                <div class="scroll page"><svg><use href="#haut"/></svg><i></i><svg><use href="#bas"/></svg></div>
            </div>
        </section>
    </section>

    <script>
        // wallpaper stripes: staircases of a steep then a flat segment
        function dessinerFond() {
            let d = '';
            for (let k = -90; k < 110; k++) {
                let x = k * 25 - 290;
                let y = -k * 12 - 346;
                d += 'M' + x + ' ' + y;
                for (let i = 0; i < 20; i++) {
                    d += 'l45 125l100 48';
                }
            }
            document.querySelectorAll('.zigzag').forEach(function (p) {
                p.setAttribute('d', d);
            });
        }

        // red squiggles under the words the French dictionary does not know
        function correcteur() {
            const zone = document.getElementById('spelling');
            const lignes = document.getElementById('texte').value.split('\n');
            const mots = /\b(firewire-\w+|not|loaded|present|stack|False|True|statically|linked|Kernel|The|is|running|(?<!newer )kernel|earlier|than|and|problems|experienced|either|try|with|the|old|Firewire|upgrade|to)\b/g;
            lignes.slice(0, 18).forEach(function (ligne, n) {
                for (const m of ligne.matchAll(mots)) {
                    const s = document.createElement('span');
                    s.style.left = m.index + 'ch';
                    s.style.top = (n * 15 + 12) + 'px';
                    s.style.width = m[0].length + 'ch';
                    zone.appendChild(s);
                }
            });
        }

        dessinerFond();
        correcteur();
    </script>

</body>
</html>
```
FILE: styles.css
```css
* {
    box-sizing: border-box;
}

body {
    margin: 0;
    font-family: "Noto Sans", sans-serif;
    font-size: 14px;
    color: #333;
}

button, input, select, textarea {
    font: inherit;
    color: inherit;
    margin: 0;
}

button {
    background: none;
    border: none;
    padding: 0;
}

h1, h2, h3, p {
    margin: 0;
}

svg {
    flex: none;
}

.defs {
    position: absolute;
    width: 0;
    height: 0;
}

.i16 { width: 16px; height: 16px; }
.i18 { width: 18px; height: 18px; }
.i20 { width: 20px; height: 20px; }
.i22 { width: 22px; height: 22px; }

.lzk-text {
    font: bold 9px "Liberation Sans", sans-serif;
    fill: #1414e6;
}

/* desktop */
.screen {
    position: relative;
    height: 50vh;
    display: flex;
    flex-direction: column;
    overflow: hidden;
}

.wallpaper {
    position: absolute;
    width: 100%;
    height: 100%;
}

.zigzag {
    fill: none;
    stroke: rgba(110, 110, 110, 0.6);
    stroke-width: 15px;
}

.panel {
    position: relative;
    display: flex;
    align-items: center;
    height: 28px;
    padding-left: 5px;
    background: #d4d4d4;
    border-bottom: 1px solid #999;
}

.panel > button {
    margin-left: 8px;
}

.panel > .i22 {
    margin-left: 5px;
}

.panel > .i20 + button {
    margin-left: 7px;
}

.tray {
    display: flex;
    align-items: center;
    gap: 3px;
    margin-left: auto;
    padding-right: 4px;
}

.patch {
    margin-right: 23px;
}

.clock {
    margin-left: 4px;
}

.grip {
    width: 4px;
    height: 16px;
    margin-left: 4px;
    background: repeating-linear-gradient(#bbb 0 4px, transparent 4px 6px);
}

.folder {
    position: absolute;
    left: 18px;
    top: 50px;
    width: 140px;
    text-align: center;
    line-height: 19px;
    color: #fff;
    text-decoration: none;
    text-shadow: 1px 1px 1px #000;
}

.folder svg {
    display: block;
    width: 46px;
    height: 44px;
    margin: 0 auto 5px;
}

.taskbar {
    height: 25px;
    margin-top: auto;
    padding-left: 2px;
    border-top: 1px solid #aaa;
    border-bottom: none;
}

.taskbar .grip {
    margin: 0 4px;
}

.panel .task {
    display: flex;
    align-items: center;
    gap: 7px;
    width: 191px;
    height: 24px;
    margin: 0;
    padding-left: 4px;
    white-space: nowrap;
}

.panel .task.active {
    background: linear-gradient(#d0d0d0, #aeaeae);
}

.workspaces {
    display: flex;
    gap: 1px;
    height: 24px;
    margin-left: auto;
}

.workspaces span {
    width: 21px;
    background: #949494;
}

.workspaces .current {
    display: flex;
    flex-direction: column;
    gap: 4px;
    padding: 1px 4px 0 1px;
    background: linear-gradient(#6f8a58, #2c3a20);
}

.workspaces i, .workspaces b {
    background: #8e9e84;
    border: 1px solid #b2d98c;
    height: 7px;
    margin: 0 0 0 3px;
}

.workspaces b {
    height: 12px;
    margin: 0;
    background: linear-gradient(#7a9a5c, #42592f);
}

.pointer {
    position: absolute;
    left: 443px;
    top: 111px;
    width: 14px;
    height: 20px;
}

/* windows */
.window {
    position: absolute;
    display: flex;
    flex-direction: column;
    padding: 0 5px 5px;
    background: #d4d4d4;
    border: 1px solid #707070;
    border-radius: 6px 6px 0 0;
    box-shadow: 0 3px 12px rgba(0, 0, 0, 0.6);
}

.titlebar {
    display: flex;
    align-items: center;
    gap: 10px;
    height: 30px;
    flex: none;
}

.titlebar h2 {
    flex: 1;
    text-align: center;
    font-size: 14px;
    color: #444;
}

.titlebar button {
    width: 18px;
    height: 18px;
    margin-bottom: 4px;
}

.titlebar svg {
    display: block;
    width: 18px;
    height: 18px;
}

.titlebar.right {
    justify-content: flex-end;
    padding-right: 5px;
}

.qt {
    flex: 1;
    background: #373737;
    color: #dcdcdc;
    font-family: "DejaVu Sans", sans-serif;
    font-size: 13px;
}

.qt h3 {
    font-size: 13px;
    font-weight: normal;
    line-height: 24px;
}

.off {
    color: #7b7b7b;
}

.groupbox {
    border: 1px solid #535353;
    border-radius: 3px;
}

.btn {
    height: 24px;
    width: 78px;
    border: 1px solid #262626;
    border-radius: 3px;
    background: linear-gradient(#555, #474747);
    box-shadow: inset 0 0 0 1px #5e5e5e;
}

.btn.mini {
    width: 29px;
}

.btn.ok {
    border-color: #14506f;
    background: linear-gradient(#4b565c, #404a50);
    box-shadow: inset 0 0 0 1px #3c6f86;
}

/* Cadence window */
.cadence {
    left: 317px;
    top: 120px;
    width: 1169px;
    height: 657px;
}

.cadence-body {
    display: flex;
    flex-direction: column;
    padding: 10px 9px;
}

.cadence-tab {
    width: 84px;
    height: 27px;
    text-align: left;
    padding-left: 11px;
    background: #4a4a4a;
    border: 1px solid #5c5c5c;
    border-bottom: none;
    border-radius: 3px 3px 0 0;
}

.cadence-panel {
    flex: 1;
    display: flex;
    justify-content: space-between;
    padding: 40px 11px 0 10px;
    background: #4a4a4a;
    border: 1px solid #5c5c5c;
    outline: 1px solid #262626;
}

.cadence-left {
    width: 300px;
}

.cadence-left p {
    padding: 9px 11px;
}

.g1 { height: 85px; margin-bottom: 4px; }
.g1 p { padding-left: 19px; }
.g2 { height: 48px; margin-bottom: 4px; }
.g2 p { padding-top: 14px; }
.g3 { height: 94px; }
.g3 p { padding-top: 64px; }

.cadence-right {
    width: 300px;
    margin-top: 23px;
}

.g4 {
    height: 267px;
    padding: 198px 10px 0;
}

.g4 > .btn {
    width: 202px;
    display: block;
    margin: 0 0 7px auto;
}

.cadence-right .line {
    display: flex;
    align-items: center;
    justify-content: flex-end;
    gap: 13px;
}

.g5 {
    margin-top: 27px;
    height: 203px;
    padding: 4px;
}

.toolbox {
    height: 194px;
    width: 208px;
    margin-left: auto;
    border: 1px solid #2a2a2a;
}

.fold {
    display: block;
    width: 100%;
    height: 32px;
}

.band {
    height: 99px;
    padding: 22px 2px 0;
    background: #373737;
}

.band > .btn {
    display: block;
    width: 191px;
    margin-bottom: 7px;
}

.cadence-right .band .line {
    gap: 6px;
}

.band select.btn {
    width: 180px;
}

/* JACK dialog */
.jack {
    left: 386px;
    top: 111px;
    width: 960px;
    height: 663px;
}

.jack .titlebar {
    gap: 0;
    padding-right: 4px;
}

.jack-body {
    display: flex;
    flex-direction: column;
    padding: 11px 12px;
}

.tabs {
    display: flex;
    align-items: flex-end;
    gap: 1px;
    height: 27px;
}

.tabs button {
    width: 70px;
    height: 24px;
    background: #424242;
    border: 1px solid #5c5c5c;
    border-bottom: none;
    border-radius: 3px 3px 0 0;
    outline: 1px solid #2b2b2b;
}

.tabs .active {
    width: 60px;
    height: 27px;
    background: #4a4a4a;
    outline: none;
}

.jack-panel {
    flex: 1;
    display: flex;
    gap: 6px;
    padding: 10px 10px 8px 9px;
    background: #4a4a4a;
    border: 1px solid #5c5c5c;
    outline: 1px solid #262626;
}

.drivers {
    display: flex;
    flex-direction: column;
    width: 87px;
    background: #313131;
    border: 1px solid #252525;
}

.drivers b {
    height: 21px;
    padding-left: 14px;
    line-height: 20px;
    text-align: center;
    background: #484848;
    border-bottom: 1px solid #252525;
}

.drivers button {
    height: 30px;
    padding-left: 14px;
    border-bottom: 1px solid #2b2b2b;
}

.drivers .active {
    background: #135f8b;
    color: #fff;
}

.settings {
    flex: 1;
    display: flex;
    flex-direction: column;
}

.settings h3 {
    margin-top: -2px;
}

.settings select, .spin {
    display: flex;
    height: 24px;
    border: 1px solid #242424;
    border-radius: 3px;
    background: #313131;
}

.settings select, .band select {
    appearance: none;
    padding: 0 4px;
    background: url("data:image/svg+xml,%3Csvg xmlns='http://www.w3.org/2000/svg' width='20' height='22'%3E%3Cpath d='M0 0h20v22H0z' fill='%234f4f4f'/%3E%3Cpath d='M6 9h8l-4 4z' fill='%23aaa'/%3E%3C/svg%3E") right center no-repeat #313131;
}

.band select, .settings select.plain {
    background-color: #4f4f4f;
    opacity: 1;
}

.settings select.plain {
    color: #7b7b7b;
}

.spin input {
    flex: 1;
    width: 10px;
    padding: 0 5px;
    background: none;
    border: none;
}

.spin i {
    width: 14px;
    background: url("data:image/svg+xml,%3Csvg xmlns='http://www.w3.org/2000/svg' width='14' height='22'%3E%3Cpath d='M3 9h8L7 5zM3 14h8l-4 4z' fill='%23aaa'/%3E%3C/svg%3E") center no-repeat #4f4f4f;
}

.spin i.low {
    background-image: url("data:image/svg+xml,%3Csvg xmlns='http://www.w3.org/2000/svg' width='14' height='22'%3E%3Cpath d='M3 9h8L7 5z' fill='%23999'/%3E%3Cpath d='M3 14h8l-4 4z' fill='%23777'/%3E%3C/svg%3E");
}

input[type="checkbox"] {
    appearance: none;
    width: 14px;
    height: 14px;
    margin-right: 5px;
    background: #333 center no-repeat;
    border: 1px solid #222;
    flex: none;
}

input[type="checkbox"]:checked {
    background-image: url("data:image/svg+xml,%3Csvg xmlns='http://www.w3.org/2000/svg' width='12' height='12'%3E%3Cpath d='M2 6l3 4 5-8' fill='none' stroke='%23ddd' stroke-width='2'/%3E%3C/svg%3E");
}

.device {
    display: flex;
    height: 173px;
    padding: 9px 0 0;
}

.fields {
    display: grid;
    grid-template-columns: 262px 250px;
    grid-auto-rows: 24px;
    gap: 7px;
    align-items: center;
    text-align: right;
}

.checks {
    display: grid;
    grid-auto-rows: 24px;
    row-gap: 7px;
    margin-left: 27px;
}

.checks label, .wide {
    display: flex;
    align-items: center;
}

.halves {
    flex: 1;
    display: flex;
    gap: 6px;
    padding-top: 6px;
}

.half-left {
    width: 326px;
    display: flex;
    flex-direction: column;
}

.half-right {
    flex: 1;
    display: flex;
    flex-direction: column;
}

.props {
    flex: 1;
    display: grid;
    grid-template-columns: 188px 119px;
    column-gap: 6px;
    row-gap: 21px;
    grid-auto-rows: 24px;
    align-items: center;
    align-content: start;
    padding-top: 23px;
    text-align: right;
}

.props .wide {
    grid-column: 1 / 3;
    margin-left: 91px;
}

.latency, .misc {
    display: grid;
    grid-template-columns: 236px 1fr;
    column-gap: 6px;
    row-gap: 8px;
    grid-auto-rows: 24px;
    align-items: center;
    align-content: start;
    text-align: right;
    padding: 10px 11px 13px 0;
    margin-bottom: 6px;
}

.misc {
    flex: 1;
    row-gap: 6px;
    margin: 0;
    padding: 18px 20px 0 0;
}

.misc .wide {
    grid-column: 1 / 3;
    margin-left: 100px;
}

.actions {
    display: flex;
    gap: 8px;
    padding-top: 9px;
}

.actions .btn:first-child {
    margin-right: auto;
}

/* Firefox */
.browser {
    left: 0;
    top: 0;
    width: 1449px;
    height: 100%;
}

.browser .titlebar {
    padding: 0 5px 0 12px;
}

.browser .titlebar h2 {
    color: #858585;
}

.ff-tabs {
    display: flex;
    height: 33px;
    flex: none;
    background: linear-gradient(#d4d4d4, #c8c8c8);
    border-bottom: 1px solid #999;
}

.ff-tab {
    display: flex;
    align-items: center;
    width: 224px;
    padding: 0 10px 0 8px;
    border-right: 1px solid #aaa;
}

.ff-tab.active {
    margin-bottom: -1px;
    background: #d8d8d8;
    border-top: 2px solid #a3c97b;
}

.ff-tab span {
    flex: 1;
    margin: 0 8px 0 5px;
    overflow: hidden;
    white-space: nowrap;
    mask-image: linear-gradient(90deg, #000 80%, transparent);
}

.ff-tab svg:not(.i18), .new-tab svg {
    display: block;
    width: 10px;
    height: 10px;
    stroke: #444;
    stroke-width: 1.5px;
}

.new-tab {
    padding: 0 10px;
}

.new-tab svg {
    width: 14px;
    height: 14px;
}

.ff-nav {
    display: flex;
    align-items: center;
    height: 40px;
    flex: none;
    padding: 0 4px;
    background: #d9d9d9;
}

.ff-nav button {
    width: 32px;
    height: 32px;
    display: flex;
    align-items: center;
    justify-content: center;
}

.ff-nav svg {
    width: 16px;
    height: 16px;
    fill: none;
    stroke: #444;
    stroke-width: 2px;
}

.ff-nav .back {
    background: #f8f8f8;
    border: 1px solid #999;
    border-radius: 16px;
}

.ff-nav .fwd svg {
    stroke: #999;
}

.urlbar {
    flex: 1;
    display: flex;
    align-items: center;
    gap: 12px;
    height: 30px;
    margin: 0 115px;
    padding: 0 6px 0 9px;
    background: #f8f8f8;
    border: 1px solid #aaa;
    border-radius: 3px;
}

.urlbar svg {
    stroke: #666;
}

.urlbar b {
    height: 22px;
    border-left: 1px solid #aaa;
}

.url {
    flex: 1;
    margin-left: -4px;
}

.url i {
    font-style: normal;
    color: #8c8c8c;
}

.ff-tools {
    display: flex;
}

.ff-tools .menu {
    margin-left: 6px;
    border-left: 1px solid #bbb;
}

.bookmarks {
    display: flex;
    align-items: center;
    gap: 13px;
    height: 26px;
    flex: none;
    padding: 0 0 2px 11px;
    background: #d9d9d9;
    border-bottom: 1px solid #a8a8a8;
    white-space: nowrap;
}

.bookmarks a {
    display: flex;
    align-items: center;
    gap: 3px;
    color: #333;
    text-decoration: none;
}

.bookmarks .loose {
    gap: 8px;
}

.viewport {
    flex: 1;
    min-height: 0;
    display: flex;
    overflow: hidden;
    background: #f0f0f0;
    font-family: "Liberation Sans", Arial, sans-serif;
    font-size: 15px;
    line-height: 18px;
    color: #000;
}

.viewport a {
    color: inherit;
}

/* scrollbars */
.scroll {
    display: flex;
    flex-direction: column;
    width: 14px;
    background: #dcdcdc;
}

.scroll svg {
    width: 10px;
    height: 10px;
    margin: 4px 2px;
}

.scroll i {
    background: #b4b4b4;
    border: 1px solid #8a8a8a;
    border-radius: 7px;
}

.scroll.page i {
    height: 120px;
    margin: 32px 0 auto;
}

.scroll.low {
    flex: 1;
}

.scroll.low i {
    height: 44px;
    margin-top: auto;
}

/* site columns */
.box {
    background: #fff;
    border: 1px solid #bbb;
    border-radius: 5px;
    box-shadow: 0 2px 6px rgba(0, 0, 0, 0.25);
}

.box h3 {
    height: 23px;
    line-height: 24px;
    text-align: center;
    font-size: 18px;
    border-bottom: 1px solid #bbb;
    text-shadow: 2px 2px 3px #aaa;
}

.pill {
    height: 19px;
    padding: 0 8px;
    font-size: 13px;
    font-weight: bold;
    line-height: 15px;
    background: #fff;
    border: 1px solid #000;
    border-radius: 4px;
}

.viewport input[type="text"], .shout textarea, .textbox {
    background: #fff;
    border: 2px solid;
    border-color: #8a8a8a #d4d4d4 #d4d4d4 #8a8a8a;
    border-radius: 0;
}

.col-left {
    width: 195px;
    padding: 0 10px 0 5px;
}

.menu-list {
    display: flex;
    flex-direction: column;
    margin-top: -10px;
    padding-bottom: 4px;
}

.menu-list a {
    position: relative;
    height: 28px;
    padding-left: 9px;
    line-height: 28px;
    text-decoration: none;
}

.menu-list .sub::after {
    content: "";
    position: absolute;
    right: 22px;
    top: 9px;
    border: 5px solid transparent;
    border-left-color: #777;
    border-right: none;
}

.signets {
    display: flex;
    flex-direction: column;
    align-items: center;
    gap: 4px;
    margin-top: 5px;
    padding-bottom: 4px;
}

.signets h3 {
    width: 100%;
}

.signets input {
    width: 166px;
    height: 19px;
    margin-top: 4px;
}

.signets .pill {
    height: 18px;
    padding: 0 7px;
}

.forum {
    flex: 1;
    min-width: 0;
    padding-top: 16px;
    background: #fff;
    border: 1px solid #bbb;
    border-width: 0 1px;
    box-shadow: 0 0 8px rgba(0, 0, 0, 0.25);
}

.forum h1 {
    display: flex;
    align-items: center;
    gap: 6px;
    height: 36px;
    border: 1px solid #bbb;
    border-width: 1px 0;
    font-size: 20px;
    color: #e8400c;
}

.forum h1 svg {
    width: 54px;
    height: 34px;
}

.desc {
    font-size: 14px;
    font-style: italic;
    white-space: nowrap;
}

.forum-actions {
    display: flex;
    gap: 12px;
    padding: 6px 34px 0 7px;
}

.forum-actions .pill {
    padding: 0 10px;
}

.watch {
    margin: -3px 0 0 auto;
    display: flex;
    gap: 2px;
}

.crumbs {
    display: flex;
    gap: 4px;
    margin-top: 10px;
}

.post {
    display: grid;
    grid-template-columns: 158px 742px;
    row-gap: 8px;
    padding: 5px 0 0 4px;
}

.post input[type="text"] {
    height: 23px;
    padding: 0;
    font-family: "Noto Sans", sans-serif;
    font-size: 14px;
}

.post .short {
    width: 562px;
}

.toolbar {
    display: flex;
    align-items: flex-start;
    height: 37px;
    padding: 8px 6px 0;
    background: #eee;
    border: 1px solid #999;
    border-width: 0 1px 1px 0;
}

.toolbar button {
    width: 16px;
    height: 18px;
    margin-right: 10px;
    font-family: "Liberation Serif", serif;
    font-size: 15px;
    line-height: 18px;
    color: #333;
}

.toolbar button:last-child {
    margin: 0 0 0 5px;
}

.toolbar svg {
    display: block;
    width: 16px;
    height: 16px;
}

.sep {
    width: 3px;
    height: 18px;
    margin: 0 14px 0 -6px;
    border: 1px solid #bbb;
    border-width: 0 1px;
}

.sep.end {
    height: 30px;
    margin: -6px 13px 0 auto;
}

.textbox {
    display: flex;
    height: 318px;
    margin-top: 2px;
}

.text-wrap {
    position: relative;
    flex: 1;
    font-family: "DejaVu Sans Mono", monospace;
    font-size: 12px;
    line-height: 15px;
}

.text-wrap textarea {
    display: block;
    width: 100%;
    height: 100%;
    padding: 0 1px;
    border: none;
    resize: none;
    overflow: hidden;
    background: none;
}

.spelling {
    position: absolute;
    left: 1px;
    top: 0;
    pointer-events: none;
}

.spelling span {
    position: absolute;
    height: 3px;
    background: url("data:image/svg+xml,%3Csvg xmlns='http://www.w3.org/2000/svg' width='4' height='3'%3E%3Cpath d='M0 2.500L2 .500l2 2' fill='none' stroke='red'/%3E%3C/svg%3E");
}

.text-side {
    display: flex;
    flex-direction: column;
    width: 14px;
}

.corner {
    width: 14px;
    height: 14px;
}

.radios {
    display: flex;
    flex-direction: column;
    padding-top: 1px;
}

.radios label {
    display: flex;
    align-items: center;
    line-height: 19px;
}

.radios input {
    appearance: none;
    width: 13px;
    height: 13px;
    margin: 3px 10px 0 12px;
    border: 1px solid #bbb;
    border-radius: 7px;
    background: #d0d0d0;
}

.radios input:checked {
    background: radial-gradient(#5a7a48 2px, #c8c8c8 4px);
}

.submit {
    display: flex;
    gap: 12px;
    padding: 4px 0 0 4px;
}

.help {
    padding: 32px 4px 0;
}

.help p {
    margin-top: 18px;
}

.search {
    display: flex;
    align-items: center;
    justify-content: center;
    gap: 8px;
    margin: 30px 0 8px;
}

.search input {
    width: 304px;
    height: 23px;
}

table {
    width: 100%;
    table-layout: fixed;
    border-collapse: collapse;
}

.c1 { width: 38px; }
.c2 { width: 374px; }
.c3 { width: 72px; }
.c4 { width: 63px; }
.c5 { width: 306px; }
.c6 { width: 120px; }

th {
    padding: 1px 0;
    background: #4a4a4a;
    color: #e8400c;
    white-space: nowrap;
}

th.white {
    color: #fff;
}

th svg {
    width: 12px;
    height: 10px;
}

td {
    padding: 3px;
    vertical-align: top;
    border: 1px solid #777;
}

.odd td {
    background: #dcdcdc;
}

.icon {
    text-align: center;
}

.num {
    text-align: right;
}

.topic {
    text-decoration: none;
}

td .topic {
    color: #ff4500;
}

small {
    display: block;
    font-size: 12px;
}

.col-right {
    width: 195px;
    padding: 0 5px 0 10px;
}

.online {
    margin-top: -3px;
    padding: 0 0 3px 15px;
}

.online a {
    display: flex;
    align-items: center;
    gap: 5px;
    text-decoration: none;
    height: 18px;
}

.online svg {
    width: 18px;
    height: 14px;
}

.shout {
    display: flex;
    flex-direction: column;
    align-items: center;
    margin-top: 7px;
    padding: 0 9px;
    font-size: 14px;
    line-height: 17px;
}

.shout h3 {
    align-self: stretch;
    margin: 0 -9px 5px;
    color: #ff4500;
}

.shout-text {
    position: relative;
    width: 100%;
    height: 73px;
    margin-bottom: 4px;
}

.shout-text textarea {
    display: block;
    width: 100%;
    height: 100%;
    resize: none;
}

.shout-text svg {
    position: absolute;
    right: 3px;
    bottom: 3px;
    width: 12px;
    height: 12px;
}

.shout p {
    align-self: stretch;
    margin: 6px 0 0;
    padding: 4px 4px 4px 5px;
    border: 1px solid #888;
    border-radius: 5px;
}

.shout .pill {
    margin-bottom: 4px;
}

.shout p svg {
    width: 16px;
    height: 16px;
    vertical-align: baseline;
}
```
